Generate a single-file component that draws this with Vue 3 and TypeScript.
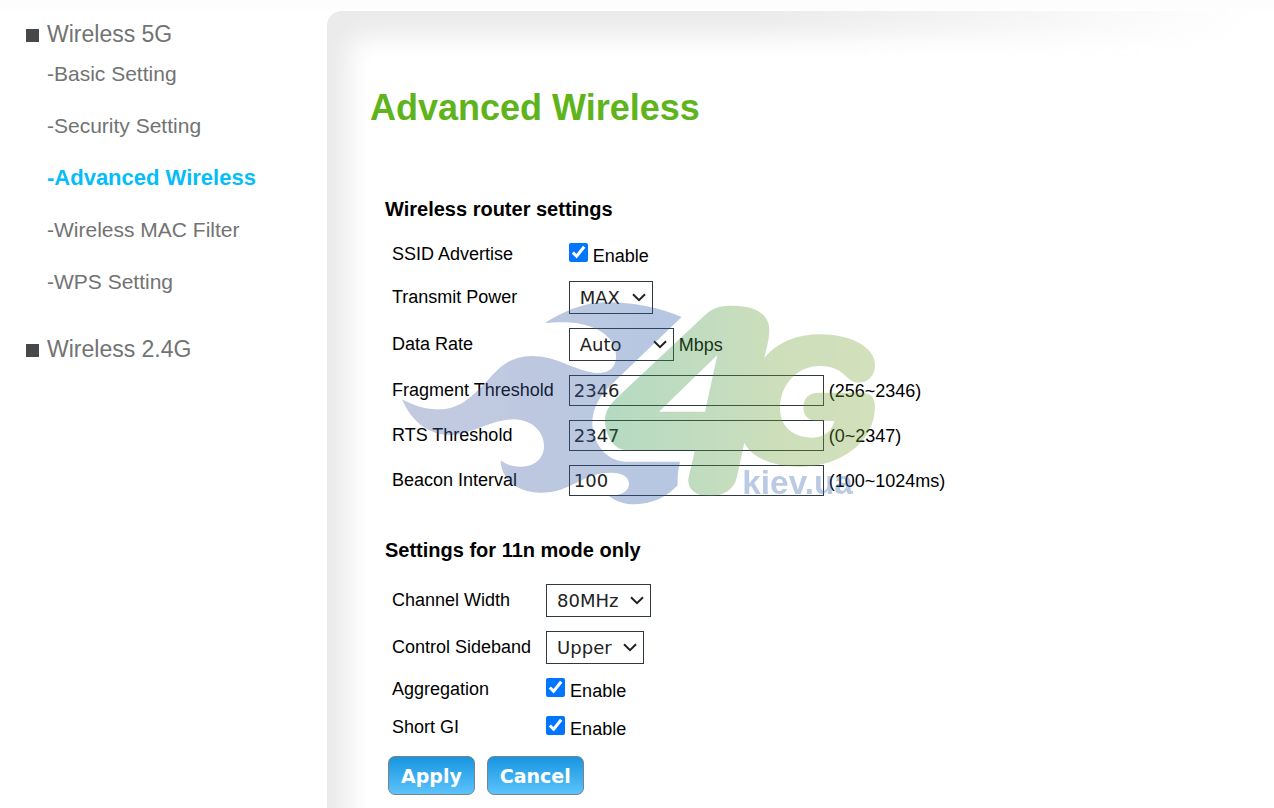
<script setup lang="ts">
import { reactive } from 'vue'

interface NavGroup {
  title: string
  items: { label: string; active?: boolean }[]
}

interface Field {
  id: string
  label: string
  kind: 'check' | 'select' | 'text'
  note?: string
  wide?: boolean
}

const nav: NavGroup[] = [
  {
    title: 'Wireless 5G',
    items: [
      { label: 'Basic Setting' },
      { label: 'Security Setting' },
      { label: 'Advanced Wireless', active: true },
      { label: 'Wireless MAC Filter' },
      { label: 'WPS Setting' },
    ],
  },
  { title: 'Wireless 2.4G', items: [] },
]

const sections: { title: string; fields: Field[] }[] = [
  {
    title: 'Wireless router settings',
    fields: [
      { id: 'ssid', label: 'SSID Advertise', kind: 'check', note: 'Enable' },
      { id: 'power', label: 'Transmit Power', kind: 'select' },
      { id: 'rate', label: 'Data Rate', kind: 'select', note: 'Mbps', wide: true },
      { id: 'fragment', label: 'Fragment Threshold', kind: 'text', note: '(256~2346)' },
      { id: 'rts', label: 'RTS Threshold', kind: 'text', note: '(0~2347)' },
      { id: 'beacon', label: 'Beacon Interval', kind: 'text', note: '(100~1024ms)' },
    ],
  },
  {
    title: 'Settings for 11n mode only',
    fields: [
      { id: 'width', label: 'Channel Width', kind: 'select' },
      { id: 'sideband', label: 'Control Sideband', kind: 'select' },
      { id: 'aggregation', label: 'Aggregation', kind: 'check', note: 'Enable' },
      { id: 'shortgi', label: 'Short GI', kind: 'check', note: 'Enable' },
    ],
  },
]

const checks = reactive<Record<string, boolean>>({ ssid: true, aggregation: true, shortgi: true })
const values = reactive<Record<string, string>>({
  power: 'MAX',
  rate: 'Auto',
  fragment: '2346',
  rts: '2347',
  beacon: '100',
  width: '80MHz',
  sideband: 'Upper',
})
</script>

<template>
  <div class="page">
    <nav class="sidebar">
      <section v-for="group in nav" :key="group.title" class="group">
        <a href="#" class="group-title"><span class="bullet"></span>{{ group.title }}</a>
        <ul v-if="group.items.length" class="items">
          <li v-for="item in group.items" :key="item.label">
            <a href="#" :class="{ active: item.active }">-{{ item.label }}</a>
          </li>
        </ul>
      </section>
    </nav>

    <main class="panel">
      <h1>Advanced Wireless</h1>
      <form class="form" @submit.prevent>
        <section v-for="section in sections" :key="section.title" class="section">
          <h2>{{ section.title }}</h2>
          <table>
            <tbody>
              <tr v-for="field in section.fields" :key="field.id" :class="field.kind">
                <th scope="row"><label :for="field.id">{{ field.label }}</label></th>
                <td>
                  <div class="control">
                    <input v-if="field.kind === 'check'" :id="field.id" v-model="checks[field.id]" type="checkbox" />
                    <span v-else-if="field.kind === 'select'" class="select-box" :class="{ wide: field.wide }">
                      <select :id="field.id" v-model="values[field.id]">
                        <option>{{ values[field.id] }}</option>
                      </select>
                      <svg class="chevron" viewBox="0 0 14 9" aria-hidden="true">
                        <path d="M1 1.2 7 7.2 13 1.2" />
                      </svg>
                    </span>
                    <input v-else :id="field.id" v-model="values[field.id]" type="text" />
                    <label v-if="field.note" :for="field.id" class="note">{{ field.note }}</label>
                  </div>
                </td>
              </tr>
            </tbody>
          </table>
        </section>
        <div class="actions">
          <button type="submit">Apply</button>
          <button type="reset">Cancel</button>
        </div>

        <svg class="watermark" viewBox="0 0 1500 690" aria-hidden="true">
          <defs>
            <linearGradient id="flame" x1="0" x2="1">
              <stop offset="0" stop-color="#4b5fa0" />
              <stop offset="1" stop-color="#2658a6" />
            </linearGradient>
            <linearGradient id="leaf" x1="0" x2="1">
              <stop offset="0" stop-color="#219147" />
              <stop offset="0.4" stop-color="#4c9840" />
              <stop offset="0.65" stop-color="#6c9e34" />
              <stop offset="1" stop-color="#7aa336" />
            </linearGradient>
          </defs>
          <g opacity="0.33">
            <path
              fill="url(#flame)"
              d="M875 81C800 49 710 34 640 37C570 40 512 70 464 99C540 93 585 99 625 120C670 145 682 180 677 212C670 242 645 252 610 248C540 236 500 198 425 198C360 200 330 230 300 263C255 310 215 357 150 358C105 360 68 345 36 328C60 385 105 432 175 435C245 436 295 390 370 388C430 389 462 428 462 468C462 507 430 531 393 530C365 530 347 523 332 511C333 570 385 608 452 608C545 608 575 548 665 548C700 548 717 563 717 582C717 606 690 618 655 617C680 635 705 643 735 643C790 642 830 620 863 586C862 560 864 540 870 515L705 515C645 513 608 455 607 400C607 350 635 311 665 283Z"
            />
            <path
              fill="url(#leaf)"
              fill-rule="evenodd"
              transform="translate(630 0)"
              d="M315 75C343 50 365 47 400 47C470 47 508 75 508 120C508 145 500 175 493 203C535 155 590 133 660 133C750 133 825 170 825 225C825 257 805 278 775 278C735 276 735 228 660 228C590 228 540 285 540 355C540 412 582 443 637 443C672 443 696 423 703 393L655 393C625 393 610 378 610 352C610 325 627 308 655 308L778 308C813 308 825 320 825 352C823 455 725 530 602 530C515 530 452 500 433 458L411 560C402 600 370 618 325 618C280 618 260 590 266 562L285 480L78 480C38 480 12 425 15 385C18 350 48 326 70 305ZM352 195L315 365L177 365Z"
            />
            <text x="1057" y="613" fill="#3060ac">kiev.ua</text>
          </g>
        </svg>
      </form>
    </main>
  </div>
</template>

<style>
body {
  margin: 0;
  background: #fff;
}
</style>

<style scoped>
.page {
  display: grid;
  grid-template-columns: 327px 1fr;
  min-height: 100vh;
  box-sizing: border-box;
  padding-top: 11px;
  background: linear-gradient(#fcfcfc, #fdfdfd 8px, #fff 11px);
  font-family: 'Liberation Sans', Arial, sans-serif;
  color: #000;
}

.sidebar {
  padding: 9px 0 0 26px;
}

.group-title {
  display: flex;
  align-items: center;
  gap: 8px;
  height: 28px;
  font-size: 23px;
  color: #727373;
  text-decoration: none;
}

.bullet {
  width: 13px;
  height: 13px;
  margin-top: 3px;
  background: #48484a;
}

.items {
  list-style: none;
  margin: 0;
  padding: 0 0 27px 21px;
}

.items a {
  display: block;
  font-size: 21px;
  line-height: 52px;
  color: #727373;
  text-decoration: none;
}

.items a.active {
  font-size: 22px;
  font-weight: bold;
  color: #05bdfb;
}

.panel {
  position: relative;
  padding: 76px 0 13px 43px;
}

/* Soft inner shade on the top and left edges, fading out to the right */
.panel::before {
  content: '';
  position: absolute;
  inset: 0;
  border-radius: 14px 0 0 0;
  box-shadow: inset 22px 26px 24px #ebebeb;
  mask-image: linear-gradient(to right, #000 45%, transparent 98%);
}

h1 {
  position: relative;
  margin: 0;
  font-size: 36px;
  line-height: 42px;
  color: #5eb41a;
}

.form {
  position: relative;
  padding: 67px 0 0 15px;
}

.section + .section {
  margin-top: 34px;
}

h2 {
  margin: 0 0 14px;
  font-size: 20px;
  line-height: 26px;
}

table {
  border-collapse: collapse;
  font-size: 18px;
  line-height: 22px;
}

tr.check {
  height: 38px;
}

tr.select {
  height: 47px;
}

tr.text {
  height: 45px;
}

th {
  padding: 0 15px 2px 7px;
  font-weight: normal;
  text-align: left;
  white-space: nowrap;
}

td {
  padding: 0;
}

.control {
  display: flex;
  align-items: baseline;
  gap: 5px;
}

input[type='checkbox'] {
  width: 19px;
  height: 19px;
  margin: 0;
  accent-color: #0075ff;
}

select,
input[type='text'] {
  box-sizing: border-box;
  border: 1px solid #2f3a40;
  border-radius: 0;
  background: #fff;
  color: #222;
  font-family: 'DejaVu Sans', Verdana, sans-serif;
  font-size: 18px;
}

input[type='text'] {
  width: 255px;
  height: 31px;
  padding: 0 4px;
}

.select-box {
  position: relative;
}

select {
  display: block;
  height: 33px;
  padding: 0 31px 0 10px;
  appearance: none;
}

.wide select {
  width: 105px;
}

.chevron {
  position: absolute;
  right: 7px;
  top: 12px;
  width: 14px;
  height: 9px;
  fill: none;
  stroke: #222;
  stroke-width: 2;
  pointer-events: none;
}

.actions {
  display: flex;
  gap: 12px;
  padding: 9px 0 0 3px;
}

button {
  height: 39px;
  padding: 0 12px;
  border: 1px solid #7b8388;
  border-radius: 7px;
  background: linear-gradient(#1795e0, #5cc3fc);
  color: #fff;
  font-family: 'DejaVu Sans', Verdana, sans-serif;
  font-size: 19px;
  font-weight: bold;
}

/* Brand mark laid over the form */
.watermark {
  position: absolute;
  left: 20px;
  top: 161px;
  width: 500px;
  height: 230px;
  pointer-events: none;
}

.watermark text {
  font-family: 'Liberation Sans', Arial, sans-serif;
  font-size: 100px;
  font-weight: bold;
}
</style>
